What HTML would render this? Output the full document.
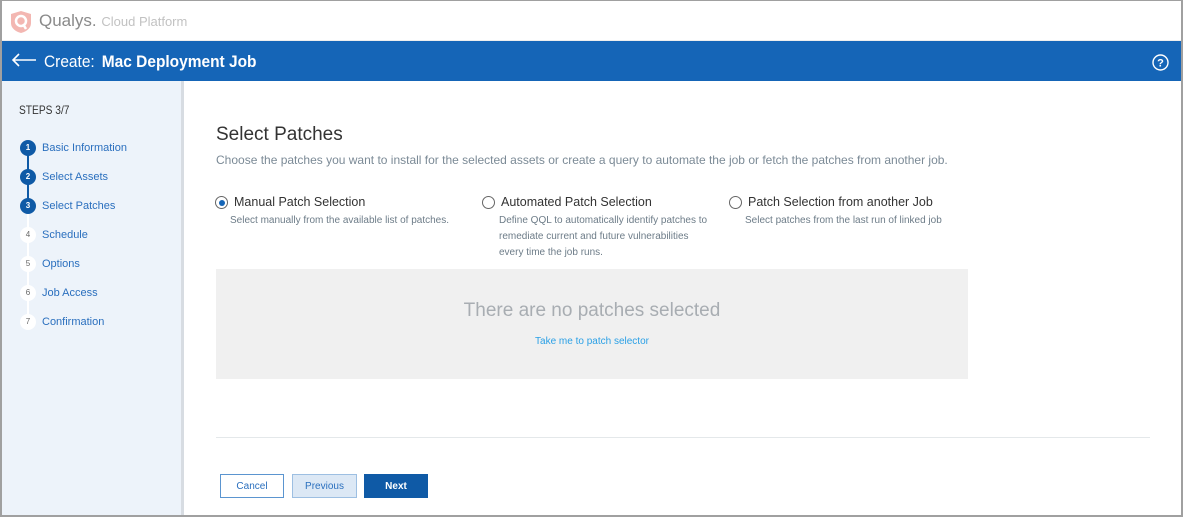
<!DOCTYPE html>
<html><head><meta charset="utf-8"><style>
*{box-sizing:border-box;margin:0;padding:0}
body{width:1183px;height:517px;overflow:hidden;font-family:"Liberation Sans",sans-serif;background:#fff;position:relative}
.frame{position:absolute;inset:0;border:2px solid #a0a0a0;border-top-width:1px}
.top{position:absolute;left:2px;top:1px;right:2px;height:40px;background:#fff;border-bottom:1px solid #eee}
.logo{position:absolute;left:8px;top:9px}
.brand{position:absolute;left:37px;top:10px;font-size:17px;color:#8a8a8a}
.brand small{font-size:13px;color:#c2c2c2}
.bar{position:absolute;left:2px;right:2px;top:41px;height:40px;background:#1565b7;color:#fff}
.bar .t{position:absolute;left:42px;top:11px;font-size:17px;transform:scaleX(.91);transform-origin:left;white-space:nowrap}
.bar b{margin-left:3px}
.side{position:absolute;left:2px;top:81px;width:182px;bottom:2px;background:#edf3fa;border-right:3px solid #d7dce2}
.steps{position:absolute;left:17px;top:22px;font-size:12px;color:#333;transform:scaleX(.85);transform-origin:left}
.st{position:absolute;left:40px;font-size:11px;color:#2a6fbe}
.c{position:absolute;left:18px;width:16px;height:16px;border-radius:50%;font-size:8px;text-align:center;line-height:16px;font-weight:bold}
.c.a{background:#0f5aa6;color:#fff}.c.i{background:#fff;color:#666;font-weight:normal}
h1{position:absolute;left:216px;top:124px;font-size:19px;font-weight:normal;color:#333}
.sub{position:absolute;left:216px;top:153px;font-size:12px;color:#7b8a96}
.opt{position:absolute;top:195px;font-size:12.5px;color:#333}
.r{position:absolute;width:13px;height:13px;border:1px solid #666;border-radius:50%;top:196px}
.r.on::after{content:"";position:absolute;left:2.5px;top:2.5px;width:6px;height:6px;border-radius:50%;background:#1565b7}
.d{position:absolute;font-size:10px;color:#6d7c88;line-height:16px}
.box{position:absolute;left:216px;top:269px;width:752px;height:110px;background:#f0f0f0}
.box .e{position:absolute;width:100%;top:31px;text-align:center;font-size:19px;color:#a8adb2}
.box .l{position:absolute;width:100%;top:67px;text-align:center;font-size:10px;color:#2aa0e6}
.hr{position:absolute;left:216px;width:934px;top:437px;height:1px;background:#e4e8ea}
.btn{position:absolute;top:474px;height:24px;font-size:10px;text-align:center;line-height:24px;border:1px solid #5b95d0}
</style></head><body>
<div class="top">
<svg class="logo" width="22" height="24" viewBox="0 0 22 24"><path d="M11 1 L21 4 V13 C21 19 15 22 11 23 C7 22 1 19 1 13 V4 Z" fill="#f3b7b2"/><circle cx="11" cy="11" r="5" fill="none" stroke="#fff" stroke-width="2.5"/><path d="M13 14 L16 19" stroke="#fff" stroke-width="2.5"/></svg>
<div class="brand">Qualys. <small>Cloud Platform</small></div>
</div>
<div class="bar">
<svg style="position:absolute;left:9px;top:12px" width="26" height="14" viewBox="0 0 26 14"><path d="M25 7H2M8 1L2 7l6 6" fill="none" stroke="#fff" stroke-width="1.6"/></svg>
<div class="t">Create: <b>Mac Deployment Job</b></div>
<svg style="position:absolute;right:12px;top:13px" width="17" height="17" viewBox="0 0 17 17"><circle cx="8.5" cy="8.5" r="7.5" fill="none" stroke="#fff" stroke-width="1.4"/><text x="8.5" y="12.5" text-anchor="middle" font-size="11" font-weight="bold" fill="#fff" font-family="Liberation Sans">?</text></svg>
</div>
<div class="side">
<div class="steps">STEPS 3/7</div>
<div style="position:absolute;left:25px;top:67px;width:2px;height:58px;background:#0f5aa6"></div>
<div style="position:absolute;left:25px;top:125px;width:2px;height:115px;background:#fff"></div>
<div class="c a" style="top:59px">1</div><div class="st" style="top:61px">Basic Information</div>
<div class="c a" style="top:88px">2</div><div class="st" style="top:90px">Select Assets</div>
<div class="c a" style="top:117px">3</div><div class="st" style="top:119px">Select Patches</div>
<div class="c i" style="top:146px">4</div><div class="st" style="top:148px">Schedule</div>
<div class="c i" style="top:175px">5</div><div class="st" style="top:177px">Options</div>
<div class="c i" style="top:204px">6</div><div class="st" style="top:206px">Job Access</div>
<div class="c i" style="top:233px">7</div><div class="st" style="top:235px">Confirmation</div>
</div>
<h1>Select Patches</h1>
<div class="sub">Choose the patches you want to install for the selected assets or create a query to automate the job or fetch the patches from another job.</div>
<div class="r on" style="left:215px"></div><div class="opt" style="left:234px">Manual Patch Selection</div>
<div class="d" style="left:230px;top:213px">Select manually from the available list of patches.</div>
<div class="r" style="left:482px"></div><div class="opt" style="left:501px">Automated Patch Selection</div>
<div class="d" style="left:499px;top:213px">Define QQL to automatically identify patches to<br>remediate current and future vulnerabilities<br>every time the job runs.</div>
<div class="r" style="left:729px"></div><div class="opt" style="left:748px">Patch Selection from another Job</div>
<div class="d" style="left:745px;top:213px">Select patches from the last run of linked job</div>
<div class="box"><div class="e">There are no patches selected</div><div class="l">Take me to patch selector</div></div>
<div class="hr"></div>
<div class="btn" style="left:220px;width:64px;color:#2a6fbe;background:#fff">Cancel</div>
<div class="btn" style="left:292px;width:65px;color:#2a6fbe;background:#dce8f5;border-color:#9dbfe2">Previous</div>
<div class="btn" style="left:364px;width:64px;color:#fff;background:#0f5aa6;border-color:#0f5aa6;font-weight:bold">Next</div>
<div class="frame"></div>
</body></html>
